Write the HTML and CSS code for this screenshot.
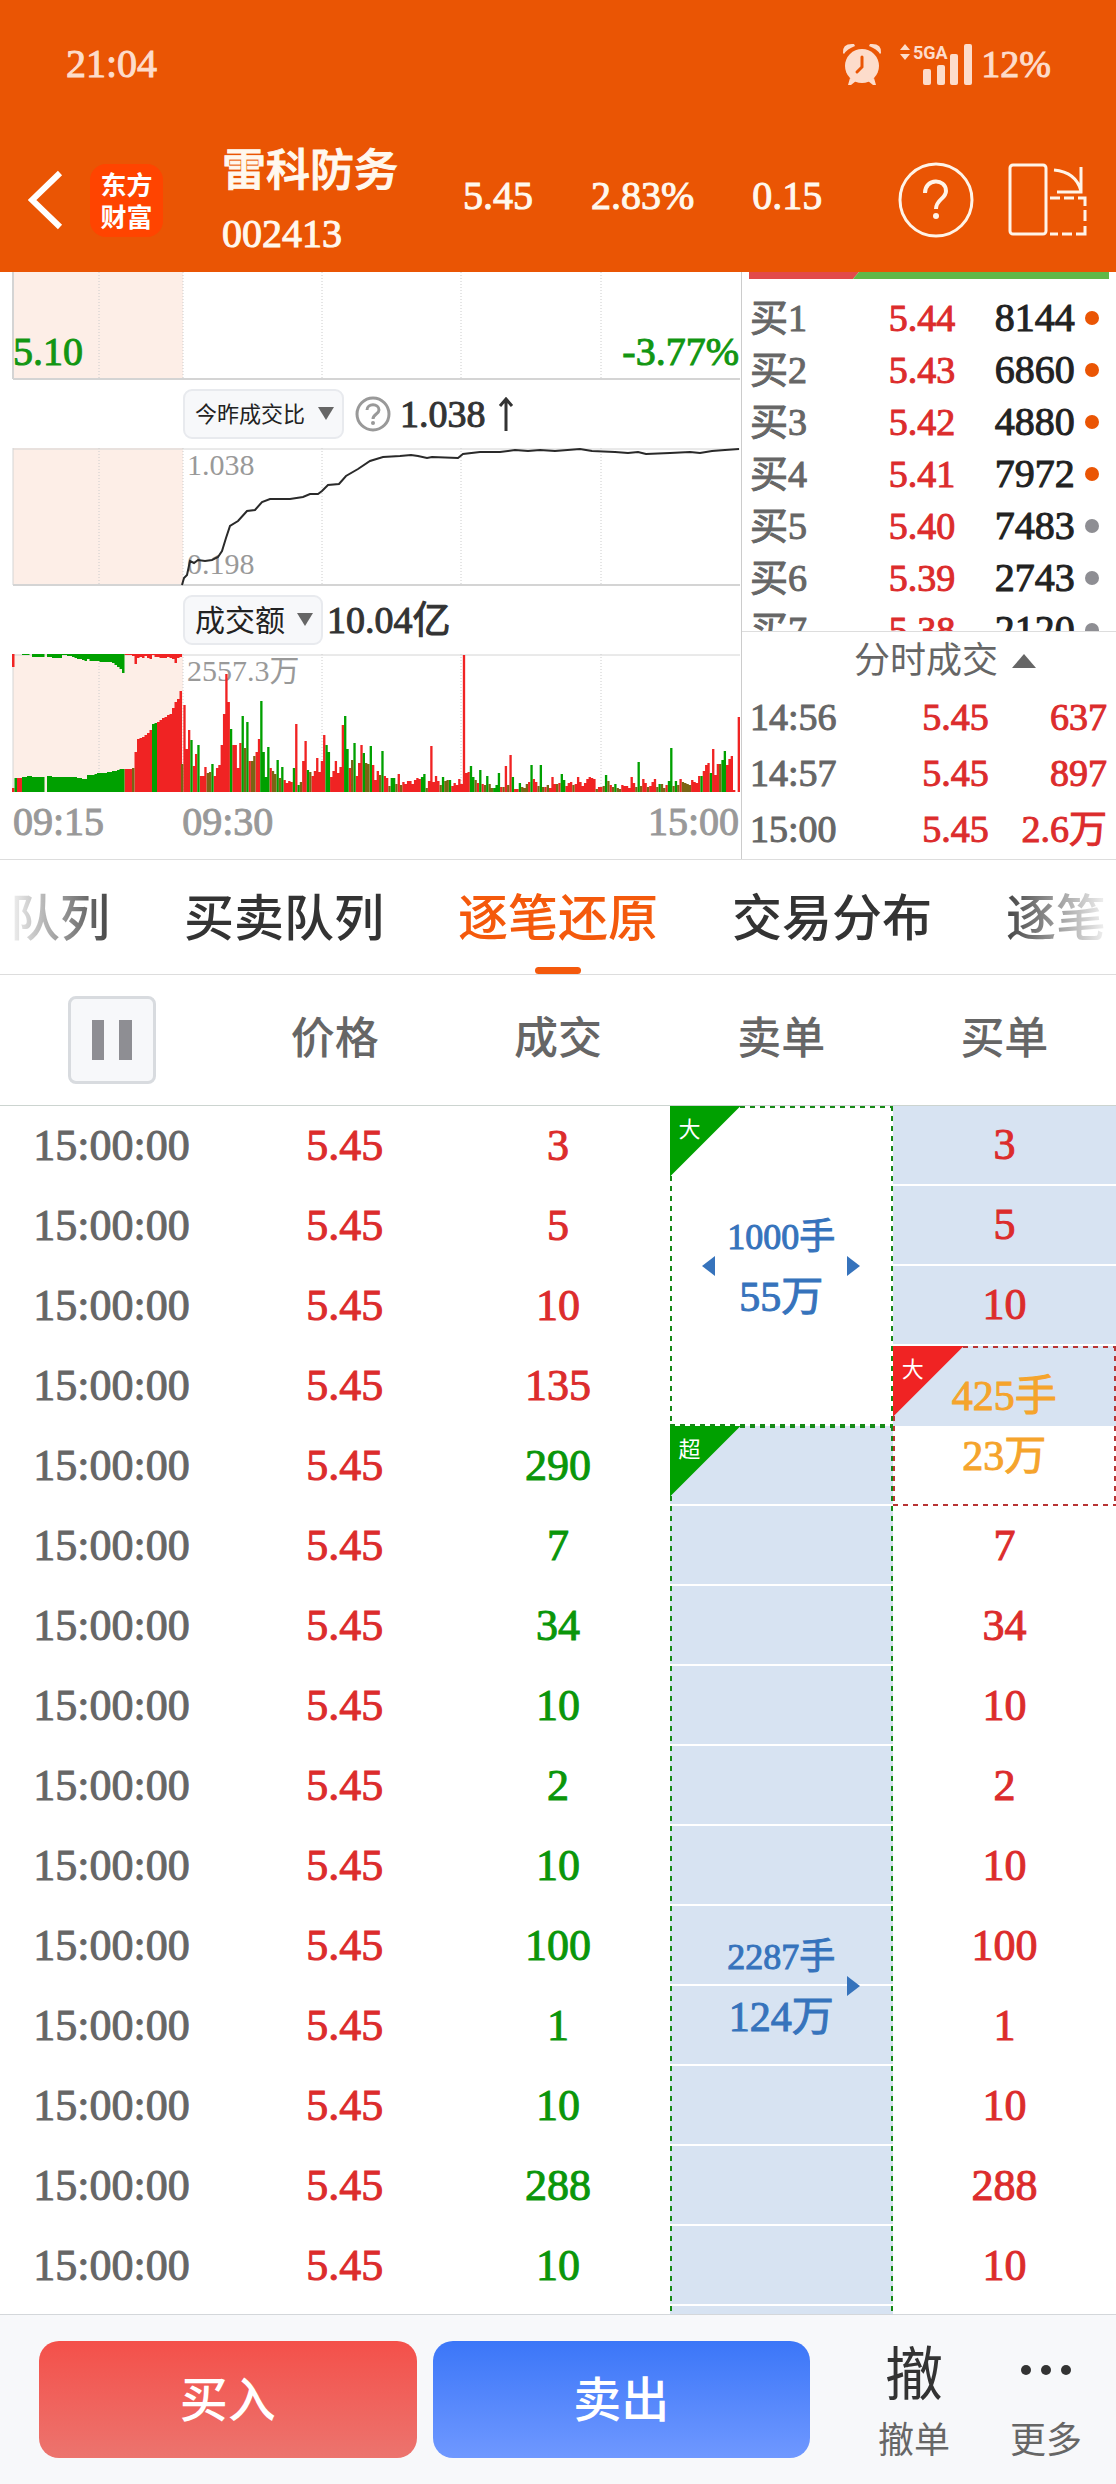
FILE: index.html
```html
<!DOCTYPE html>
<html lang="zh-CN">
<head>
<meta charset="utf-8">
<meta name="viewport" content="width=device-width, initial-scale=1">
<title>雷科防务 002413</title>
<link rel="stylesheet" href="styles.css">
</head>
<body>
<header class="top">
  <div class="status">
    <time>21:04</time>
    <div class="status-icons">
      <svg width="40" height="43" viewBox="0 0 40 43" aria-label="闹钟">
        <g fill="#fddccb"><circle cx="20" cy="23" r="17"/><path d="M1 10Q0 0 12 1L13 3Q5 6 2 11Z"/><path d="M39 10Q40 0 28 1L27 3Q35 6 38 11Z"/><path d="M8 35L6 42L9 42L14 38ZM32 35L34 42L31 42L26 38Z"/></g>
        <path d="M20 14V24L15 29" fill="none" stroke="#ea5504" stroke-width="3" stroke-linecap="round"/>
      </svg>
      <svg class="signal" width="73" height="43" viewBox="0 0 73 43" aria-label="5GA 信号">
        <g fill="#fddccb"><path d="M0 7L5 1L10 7ZM0 11L5 17L10 11Z"/><rect x="23" y="26" width="8" height="16" rx="2"/><rect x="37" y="22" width="8" height="20" rx="2"/><rect x="50" y="11" width="8" height="31" rx="2"/><rect x="64" y="1" width="8" height="41" rx="2"/>
        <text x="13" y="16" class="net">5GA</text></g>
      </svg>
      <span class="battery">12%</span>
    </div>
  </div>
  <div class="titlebar">
    <button class="icon-btn back" aria-label="返回"><svg width="36" height="60" viewBox="0 0 36 60"><path d="M32 3L4 30L32 57" fill="none" stroke="#fff" stroke-width="6"/></svg></button>
    <a class="logo" href="#">东方<br>财富</a>
    <div class="stock"><h1>雷科防务</h1><div>002413</div></div>
    <div class="quote"><span>5.45</span><span>2.83%</span><span>0.15</span></div>
    <button class="icon-btn help" aria-label="帮助"><svg width="76" height="76" viewBox="0 0 76 76" fill="none" stroke="#fff4e8" stroke-width="3"><circle cx="38" cy="38" r="36"/><path d="M27 31C27 16 48 16 48 29C48 37 38 37 38 47" stroke-width="4"/><circle cx="38" cy="54" r="3" fill="#fff4e8" stroke="none"/></svg></button>
    <button class="icon-btn" aria-label="横屏"><svg width="80" height="74" viewBox="0 0 80 74" fill="none" stroke="#fff4e8" stroke-width="3"><rect x="2" y="2" width="36" height="69" rx="3"/><path d="M46 7Q68 9 73 28M73 4V29H49"/><path d="M42 35H52M56 35H66M70 35H77V43M77 47V58M77 63V71H68M64 71H54M50 71H42"/></svg></button>
  </div>
</header>

<section class="market">
  <div class="charts">
    <div class="chart chart-price">
      <svg viewBox="0 0 741 108" preserveAspectRatio="none"><rect class="auction" x="13" width="170" height="108"/><path class="grid" d="M99 0V107M183 0V107M322 0V107M461 0V107M601 0V107"/><path class="axis" d="M13 0V107M13 107H740"/></svg>
      <span class="low">5.10</span><span class="low-pct">-3.77%</span>
    </div>
    <div class="tools">
      <span class="drop"><select class="small" aria-label="指标一"><option>今昨成交比</option></select></span>
      <svg class="hint" width="36" height="36" viewBox="0 0 36 36" fill="none" stroke="#999" stroke-width="3"><circle cx="18" cy="18" r="16"/><path d="M12 14C12 7 24 7 24 14C24 18 18 18 18 23"/><circle cx="18" cy="27" r="2" fill="#999" stroke="none"/></svg>
      <span class="value">1.038</span>
      <svg width="16" height="34" viewBox="0 0 16 34" fill="none" stroke="#333" stroke-width="3"><path d="M8 34V2M2 9L8 2L14 9"/></svg>
    </div>
    <div class="chart">
      <svg viewBox="0 0 741 138" preserveAspectRatio="none"><rect class="auction" x="13" width="170" height="138"/><path class="grid" d="M99 0V137M183 0V137M322 0V137M461 0V137M601 0V137"/><path class="axis thin" d="M13 0V137M13 1H740"/><path class="axis" d="M13 137H740"/></svg>
      <span class="tag">1.038</span><span class="tag tag-low">0.198</span>
      <svg class="over" viewBox="0 0 741 138" preserveAspectRatio="none"><polyline fill="none" stroke="#2a2a2a" stroke-width="2" points="182,137 184,130 187,127 190,113 194,115 198,112 205,113 212,112 218,109 222,103 226,90 230,78 238,73 247,63 255,62 262,54 270,51 290,51 303,49 310,46 318,46 322,43 328,37 339,36 346,28 358,21 370,13 383,9 400,8 411,7 418,8 427,10 432,9 458,10 463,6 480,4 500,4 515,2 528,3 540,2 555,3 580,1 592,3 615,4 628,5 638,4 646,6 670,5 690,4 700,5 712,3 725,2 739,1"/></svg>
    </div>
    <div class="tools">
      <span class="drop"><select aria-label="指标二"><option>成交额</option></select></span>
      <span class="value tight">10.04亿</span>
    </div>
    <div class="chart">
      <svg viewBox="0 0 741 138" preserveAspectRatio="none"><rect class="auction" x="13" width="170" height="138"/><path class="grid" d="M99 0V137M183 0V137M322 0V137M461 0V137M601 0V137"/><path class="axis thin" d="M13 0V137M13 1H740"/></svg>
      <span class="tag">2557.3万</span>
      <svg class="over" id="volume" viewBox="0 0 741 138" preserveAspectRatio="none"></svg>
    </div>
    <div class="hours"><span>09:15</span><span>09:30</span><span>15:00</span></div>
  </div>

  <div class="side">
    <div class="book">
      <div class="ratio"><svg viewBox="0 0 360 7" preserveAspectRatio="none"><path fill="#e24a4a" d="M0 0H110L104 7H0Z"/><path fill="#60b848" d="M110 0H360V7H104Z"/></svg></div>
      <table>
        <tr><th scope="row">买1</th><td class="red">5.44</td><td>8144</td><td><i class="dot hot"></i></td></tr>
        <tr><th scope="row">买2</th><td class="red">5.43</td><td>6860</td><td><i class="dot hot"></i></td></tr>
        <tr><th scope="row">买3</th><td class="red">5.42</td><td>4880</td><td><i class="dot hot"></i></td></tr>
        <tr><th scope="row">买4</th><td class="red">5.41</td><td>7972</td><td><i class="dot hot"></i></td></tr>
        <tr><th scope="row">买5</th><td class="red">5.40</td><td>7483</td><td><i class="dot"></i></td></tr>
        <tr><th scope="row">买6</th><td class="red">5.39</td><td>2743</td><td><i class="dot"></i></td></tr>
        <tr><th scope="row">买7</th><td class="red">5.38</td><td>2120</td><td><i class="dot"></i></td></tr>
      </table>
    </div>
    <button class="deals-title">分时成交<svg width="24" height="14" viewBox="0 0 24 14"><path d="M0 14L12 0L24 14Z" fill="#666"/></svg></button>
    <table class="deals">
      <tr><th scope="row">14:56</th><td>5.45</td><td>637</td></tr>
      <tr><th scope="row">14:57</th><td>5.45</td><td>897</td></tr>
      <tr><th scope="row">15:00</th><td>5.45</td><td>2.6万</td></tr>
    </table>
  </div>
</section>

<nav class="tabs">
  <a href="#">队列</a><a href="#">买卖队列</a><a href="#" class="active" aria-current="page">逐笔还原</a><a href="#">交易分布</a><a href="#">逐笔</a>
</nav>

<main class="ticks">
  <table>
    <thead><tr><th><button class="pause" aria-label="暂停"><svg width="40" height="40" viewBox="0 0 40 40" fill="#8e8e93"><rect width="12" height="40"/><rect x="27" width="13" height="40"/></svg></button></th><th>价格</th><th>成交</th><th>卖单</th><th>买单</th></tr></thead>
    <tbody>
      <tr><td>15:00:00</td><td>5.45</td><td class="red">3</td>
        <td rowspan="4" class="order sell"><b class="corner">大</b><div class="lot"><i class="arrow prev"></i><span><span class="long">1000手</span><br>55万</span><i class="arrow"></i></div></td>
        <td class="own">3</td></tr>
      <tr><td>15:00:00</td><td>5.45</td><td class="red">5</td><td class="own">5</td></tr>
      <tr><td>15:00:00</td><td>5.45</td><td class="red">10</td><td class="own">10</td></tr>
      <tr><td>15:00:00</td><td>5.45</td><td class="red">135</td>
        <td rowspan="2" class="order buy"><b class="corner">大</b><div class="lot single"><span>425手<br>23万</span></div></td></tr>
      <tr><td>15:00:00</td><td>5.45</td><td>290</td>
        <td rowspan="14" class="order sell filled"><b class="corner">超</b><div class="lot"><i class="arrow none"></i><span><span class="long">2287手</span><br>124万</span><i class="arrow"></i></div></td></tr>
      <tr><td>15:00:00</td><td>5.45</td><td>7</td><td>7</td></tr>
      <tr><td>15:00:00</td><td>5.45</td><td>34</td><td>34</td></tr>
      <tr><td>15:00:00</td><td>5.45</td><td>10</td><td>10</td></tr>
      <tr><td>15:00:00</td><td>5.45</td><td>2</td><td>2</td></tr>
      <tr><td>15:00:00</td><td>5.45</td><td>10</td><td>10</td></tr>
      <tr><td>15:00:00</td><td>5.45</td><td>100</td><td>100</td></tr>
      <tr><td>15:00:00</td><td>5.45</td><td>1</td><td>1</td></tr>
      <tr><td>15:00:00</td><td>5.45</td><td>10</td><td>10</td></tr>
      <tr><td>15:00:00</td><td>5.45</td><td>288</td><td>288</td></tr>
      <tr><td>15:00:00</td><td>5.45</td><td>10</td><td>10</td></tr>
      <tr><td></td><td></td><td></td><td></td></tr>
      <tr><td></td><td></td><td></td><td></td></tr>
      <tr><td></td><td></td><td></td><td></td></tr>
    </tbody>
  </table>
</main>

<footer class="trade">
  <button class="btn buy-btn">买入</button>
  <button class="btn sell-btn">卖出</button>
  <a class="action cancel" href="#"><span class="glyph">撤</span>撤单</a>
  <a class="action more" href="#"><span class="glyph"><svg width="52" height="12" viewBox="0 0 52 12" fill="#333"><circle cx="6" cy="6" r="5"/><circle cx="26" cy="6" r="5"/><circle cx="46" cy="6" r="5"/></svg></span>更多</a>
</footer>
<script src="chart.js"></script>
</body>
</html>
```

FILE: styles.css
```css
* { box-sizing: border-box; }
body {
  margin: 0;
  height: 100vh;
  display: flex;
  flex-direction: column;
  background: #fff;
  color: #333;
  font: 40px/48px "Liberation Serif", "Noto Sans CJK SC", serif;
  -webkit-text-stroke: 1px currentColor;
}
button, select { font: inherit; color: inherit; border: 0; background: none; padding: 0; -webkit-text-stroke: inherit; }
a { color: inherit; text-decoration: none; }
svg { display: block; flex: none; }
table { border-collapse: separate; border-spacing: 0; width: 100%; table-layout: fixed; }
th, td { padding: 0; font-weight: 400; }
.red { color: #dc2c2c; }

/* header */
.top { flex: none; height: 272px; background: #ea5504; color: #fff8ee; }
.status { display: flex; justify-content: space-between; align-items: center; height: 128px; padding: 0 65px 0 66px; color: #fddccb; }
.status-icons { display: flex; align-items: center; }
.signal { margin: 0 8px 0 18px; overflow: visible; }
.net { font: 700 18px Roboto, sans-serif; -webkit-text-stroke: 0; }
.battery { font-size: 38px; }
.titlebar { display: flex; align-items: center; height: 144px; padding: 0 28px; }
.titlebar > * { flex: none; }
.logo { width: 73px; height: 73px; margin: 0 59px 0 26px; padding-top: 4px; border-radius: 16px; background: #ff4400; color: #fff; font: 700 26px/32px "Noto Sans CJK SC", sans-serif; text-align: center; -webkit-text-stroke: 0; }
.stock { width: 241px; padding-top: 6px; white-space: nowrap; }
.stock > * { line-height: 62px; }
.stock h1 { margin: 0; font-size: 44px; font-weight: 500; }
.quote { display: flex; flex: 1 0 auto; gap: 58px; padding-bottom: 8px; }
.icon-btn.help { margin-right: 34px; }

/* market overview */
.market { flex: none; display: grid; grid-template-columns: 741fr 375fr; border-bottom: 1px solid #ddd; }
.chart { position: relative; height: 138px; }
.chart-price { height: 108px; }
.chart svg { width: 100%; height: 100%; }
.chart .over { position: absolute; inset: 0; }
.auction { fill: #fdeee7; }
.grid { fill: none; stroke: #ccc; stroke-dasharray: 1 2; }
.axis { fill: none; stroke: #d4d4d4; stroke-width: 2; }
.thin { stroke-width: 1; }
.low, .low-pct { position: absolute; bottom: 4px; left: 13px; color: #129612; }
.low-pct { left: auto; right: 2px; }
.tag { position: absolute; top: 1px; left: 187px; font-size: 30px; line-height: 32px; color: #999; -webkit-text-stroke: 0; }
.tag-low { top: auto; bottom: 6px; }
.tools { display: flex; align-items: center; height: 68px; padding-left: 183px; }
.drop { position: relative; }
.drop select { appearance: none; display: block; height: 50px; padding: 0 36px 0 10px; border: 2px solid #e8eaee; border-radius: 9px; background: #f7f8fa; font-size: 30px; color: #222; -webkit-text-stroke: 0; }
.drop select.small { font-size: 22px; }
.drop::after { content: ""; position: absolute; right: 10px; top: 18px; border: 8px solid transparent; border-top: 13px solid #666; border-bottom: 0; pointer-events: none; }
.hint { margin: 0 9px 0 11px; }
.value { margin-right: 12px; font-size: 38px; }
.value.tight { margin-left: 4px; }
.hours { display: flex; height: 67px; padding: 6px 2px 0 13px; color: #999; }
.hours span:nth-child(2) { flex: 1; margin-left: 78px; }

/* order book */
.side { border-left: 1px solid #ccc; font-size: 38px; }
.book { height: 360px; overflow: hidden; border-bottom: 1px solid #ddd; }
.ratio { padding: 0 7px; margin-bottom: 13px; }
.ratio svg { width: 100%; height: 7px; }
.side table { text-align: right; }
.side th { padding-left: 8px; text-align: left; color: #666; }
.book tr { height: 52px; }
.book th:nth-child(1) { width: 31%; }
.book td:nth-child(2) { width: 26%; }
.book td:nth-child(3) { width: 32%; color: #222; font-size: 40px; }
.book td:nth-child(4) { width: 11%; padding-left: 10px; }
.dot { display: block; width: 14px; height: 14px; border-radius: 50%; background: #8e8e93; }
.dot.hot { background: #ea5504; }
.deals-title { display: flex; align-items: center; justify-content: center; gap: 14px; width: 100%; height: 57px; padding-left: 32px; color: #666; font-size: 36px; -webkit-text-stroke: 0; }
.deals tr { height: 56px; }
.deals th { width: 34%; }
.deals td { color: #dc2c2c; }
.deals td:nth-child(2) { width: 32%; }
.deals td:last-child { padding-right: 9px; }

/* tabs */
.tabs { flex: none; display: flex; justify-content: center; gap: 74px; height: 115px; border-bottom: 1px solid #ddd; font: 500 50px/108px "Noto Sans CJK SC", sans-serif; -webkit-text-stroke: 0; overflow: hidden; }
.tabs a { flex: none; position: relative; }
.tabs a:first-child, .tabs a:last-child { color: transparent; background: linear-gradient(to right, #f2f2f2, #444) text; }
.tabs a:last-child { background: linear-gradient(to left, #f2f2f2, #444) text; }
.tabs .active { color: #f4590c; }
.active::after { content: ""; position: absolute; left: 50%; bottom: 0; width: 46px; height: 7px; margin-left: -23px; border-radius: 4px; background: #f4590c; }

/* tick table */
.ticks { flex: 1; min-height: 0; overflow: hidden; font-size: 44px; text-align: center; }
.ticks thead th { height: 131px; border-bottom: 1px solid #ccd4d0; color: #666; font-weight: 500; -webkit-text-stroke: 0; }
.pause { display: inline-flex; align-items: center; justify-content: center; width: 88px; height: 88px; border: 3px solid #d8dbdf; border-radius: 8px; background: #f7f8fa; vertical-align: middle; }
.ticks td { height: 80px; color: #dc2c2c; }
.ticks td:first-child { color: #666; }
.ticks td:nth-child(2) { padding-left: 20px; }
.ticks td:nth-child(3):not(.red) { color: #0a960a; }
.ticks .own { background: #d7e3f2; border-bottom: 2px solid #fff; }
.order {
  position: relative;
  --line: #168a16;
  --fill: linear-gradient(transparent, transparent);
  --fill-size: 100% 80px;
  background:
    repeating-linear-gradient(90deg, var(--line) 0 5px, transparent 5px 10px) top / 100% 2px no-repeat,
    repeating-linear-gradient(90deg, var(--line) 0 5px, transparent 5px 10px) bottom / 100% 2px no-repeat,
    repeating-linear-gradient(var(--line) 0 5px, transparent 5px 10px) left / 2px 100% no-repeat,
    repeating-linear-gradient(var(--line) 0 5px, transparent 5px 10px) right / 2px 100% no-repeat,
    var(--fill) top / var(--fill-size);
}
.filled { --fill: linear-gradient(#d7e3f2 78px, #fff 78px); }
.buy { --line: #b83434; --fill: linear-gradient(#d7e3f2 50%, #fff 50%); --fill-size: 100% 100%; }
.corner { position: absolute; left: 0; top: 0; width: 71px; height: 71px; padding: 4px 0 0 9px; background: #00a000; clip-path: polygon(0 0, 100% 0, 0 100%); color: #fff; font-size: 22px; line-height: 40px; font-weight: 400; text-align: left; -webkit-text-stroke: 0; }
.buy .corner { background: #f02323; }
.lot { display: flex; align-items: center; justify-content: space-between; width: 158px; margin: 0 auto; font-size: 42px; line-height: 60px; color: #3673bc; white-space: nowrap; }
.lot.single { justify-content: center; color: #f5a42c; }
.long { font-size: 36px; }
.arrow { border: 10px solid transparent; border-left: 13px solid #3673bc; border-right: 0; }
.arrow.prev { border-left: 0; border-right: 13px solid #3673bc; }
.arrow.none { visibility: hidden; }

/* bottom bar */
.trade { flex: none; display: flex; height: 170px; padding: 26px 12px 0 39px; gap: 16px; border-top: 1px solid #d4d7da; background: #f7f8fa; font-family: "Noto Sans CJK SC", sans-serif; -webkit-text-stroke: 0; }
.btn { flex: 1; height: 117px; padding-bottom: 8px; border-radius: 20px; color: #fff; font-size: 48px; font-weight: 500; }
.buy-btn { background: linear-gradient(#f4504a, #ec746e); }
.sell-btn { background: linear-gradient(#3b76f8, #6f98ff); }
.action { flex: none; display: flex; flex-direction: column; align-items: center; width: 116px; color: #666; font-size: 36px; line-height: 52px; }
.cancel { margin-left: 30px; }
.glyph { display: flex; align-items: center; height: 58px; margin-bottom: 12px; color: #333; font-size: 58px; }
```

FILE: chart.js
```js
// Turnover bars: a colour letter (r up, g down, m flat) and a height per minute.
const minutes = `m28 r87 r43 r62 g52 r26 r38 g47 r16 r16 r25 m19 m20 g28 r16 r24 r27 r47 r78 r118 r90 g63 r47 r47 r24 r49 g76 m44 g70 r31
m31 m36 r40 r53 g91 g40 g15 g45 r24 m21 m18 g32 m14 g25 r12 r9 r11 r10 g24 r68 g7 m10 r31 r51 g22 m20 r16 r21 r34 r20
r31 r57 g47 g40 r15 r21 r31 r19 r25 r67 g76 g43 r24 m32 g49 r16 r29 r47 g39 m29 m28 g46 r27 r12 r21 m17 g41 r16 r14 m6
g14 g14 m8 r18 m7 r10 r8 r11 r11 r8 r12 r14 r13 g15 g18 m4 r11 r46 r10 r16 r11 m7 g15 m11 m12 g12 r6 r9 r7 r13
r8 r137 r19 r20 g26 g15 m12 r9 g22 r8 m7 g16 m8 m4 g4 g7 g19 r5 m5 r26 m7 r37 g15 r3 r3 g9 m5 m4 m8 r10
g27 r13 r10 m6 g27 m5 r5 m7 r4 r15 r8 m8 r9 g18 g12 r6 r9 r10 m7 r8 r15 r10 r6 r9 r13 r15 r14 r13 m3 r5
r5 m6 g17 m11 r7 m5 g8 m4 m3 r7 r6 r6 r4 r15 r9 m5 g30 m6 r13 r9 m5 r6 r10 r13 m5 g8 m8 m4 r7 g11
g44 m6 g11 m7 r13 m10 m9 m8 m7 r12 r10 r9 r16 g16 r21 r27 r29 g19 r43 r17 r28 m28 g32 g41 r27 r33 r36 r2 r0 r75`.split(/\s+/);

// Opening auction: matched volume from the bottom, unmatched from the top.
const matched = `r4 g14 r14 r14 g15 g15 g16 g16 g15 g15 g15 g15 g15 g0 g16 g16 g15 g15 g15 g15 g15 g15 g15 g15 g15 g15 g14 g14 g13 g13 g17 g17 g17 g18 g19 g19
g19 g19 g20 g20 g21 g21 g22 g23 g23 r23 r23 r23 m24 r40 r53 r54 r55 r57 r59 r62 g68 g69 r70 r72 r74 r75 r77 r78 r84 r90 r93 r101`.split(/\s+/);
const unmatched = `r13 g0 g0 g0 g1 g1 g1 g0 g3 g3 g3 g3 g3 g0 g3 g3 g4 g4 g4 g4 g1 g1 g2 g2 g3 g4 g5 g5 g6 g7 g5 g7 g7 g7 g7 g8
g8 g8 g8 g8 g9 g11 g13 g15 g19 r1 r1 r1 r2 r10 r4 r3 r4 r2 r4 r5 r1 r3 r3 r4 r4 r4 r3 r4 r5 r9 r4 r3`.split(/\s+/);

const colours = { r: "#f02323", g: "#00a000", m: "#7a6414" };
function bars(list, from, to, hanging) {
  const step = (to - from) / list.length;
  const paths = { r: "", g: "", m: "" };
  list.forEach((item, i) => {
    const h = +item.slice(1);
    if (h) paths[item[0]] += `M${(from + i * step).toFixed(2)} ${hanging ? 0 : 138 - h}h${step.toFixed(2)}v${h}h-${step.toFixed(2)}z`;
  });
  return Object.keys(paths).map(k => `<path fill="${colours[k]}" d="${paths[k]}"/>`).join("");
}
document.getElementById("volume").innerHTML =
  bars(matched, 12, 182, false) + bars(unmatched, 12, 182, true) + bars(minutes, 181, 740, false);
```
